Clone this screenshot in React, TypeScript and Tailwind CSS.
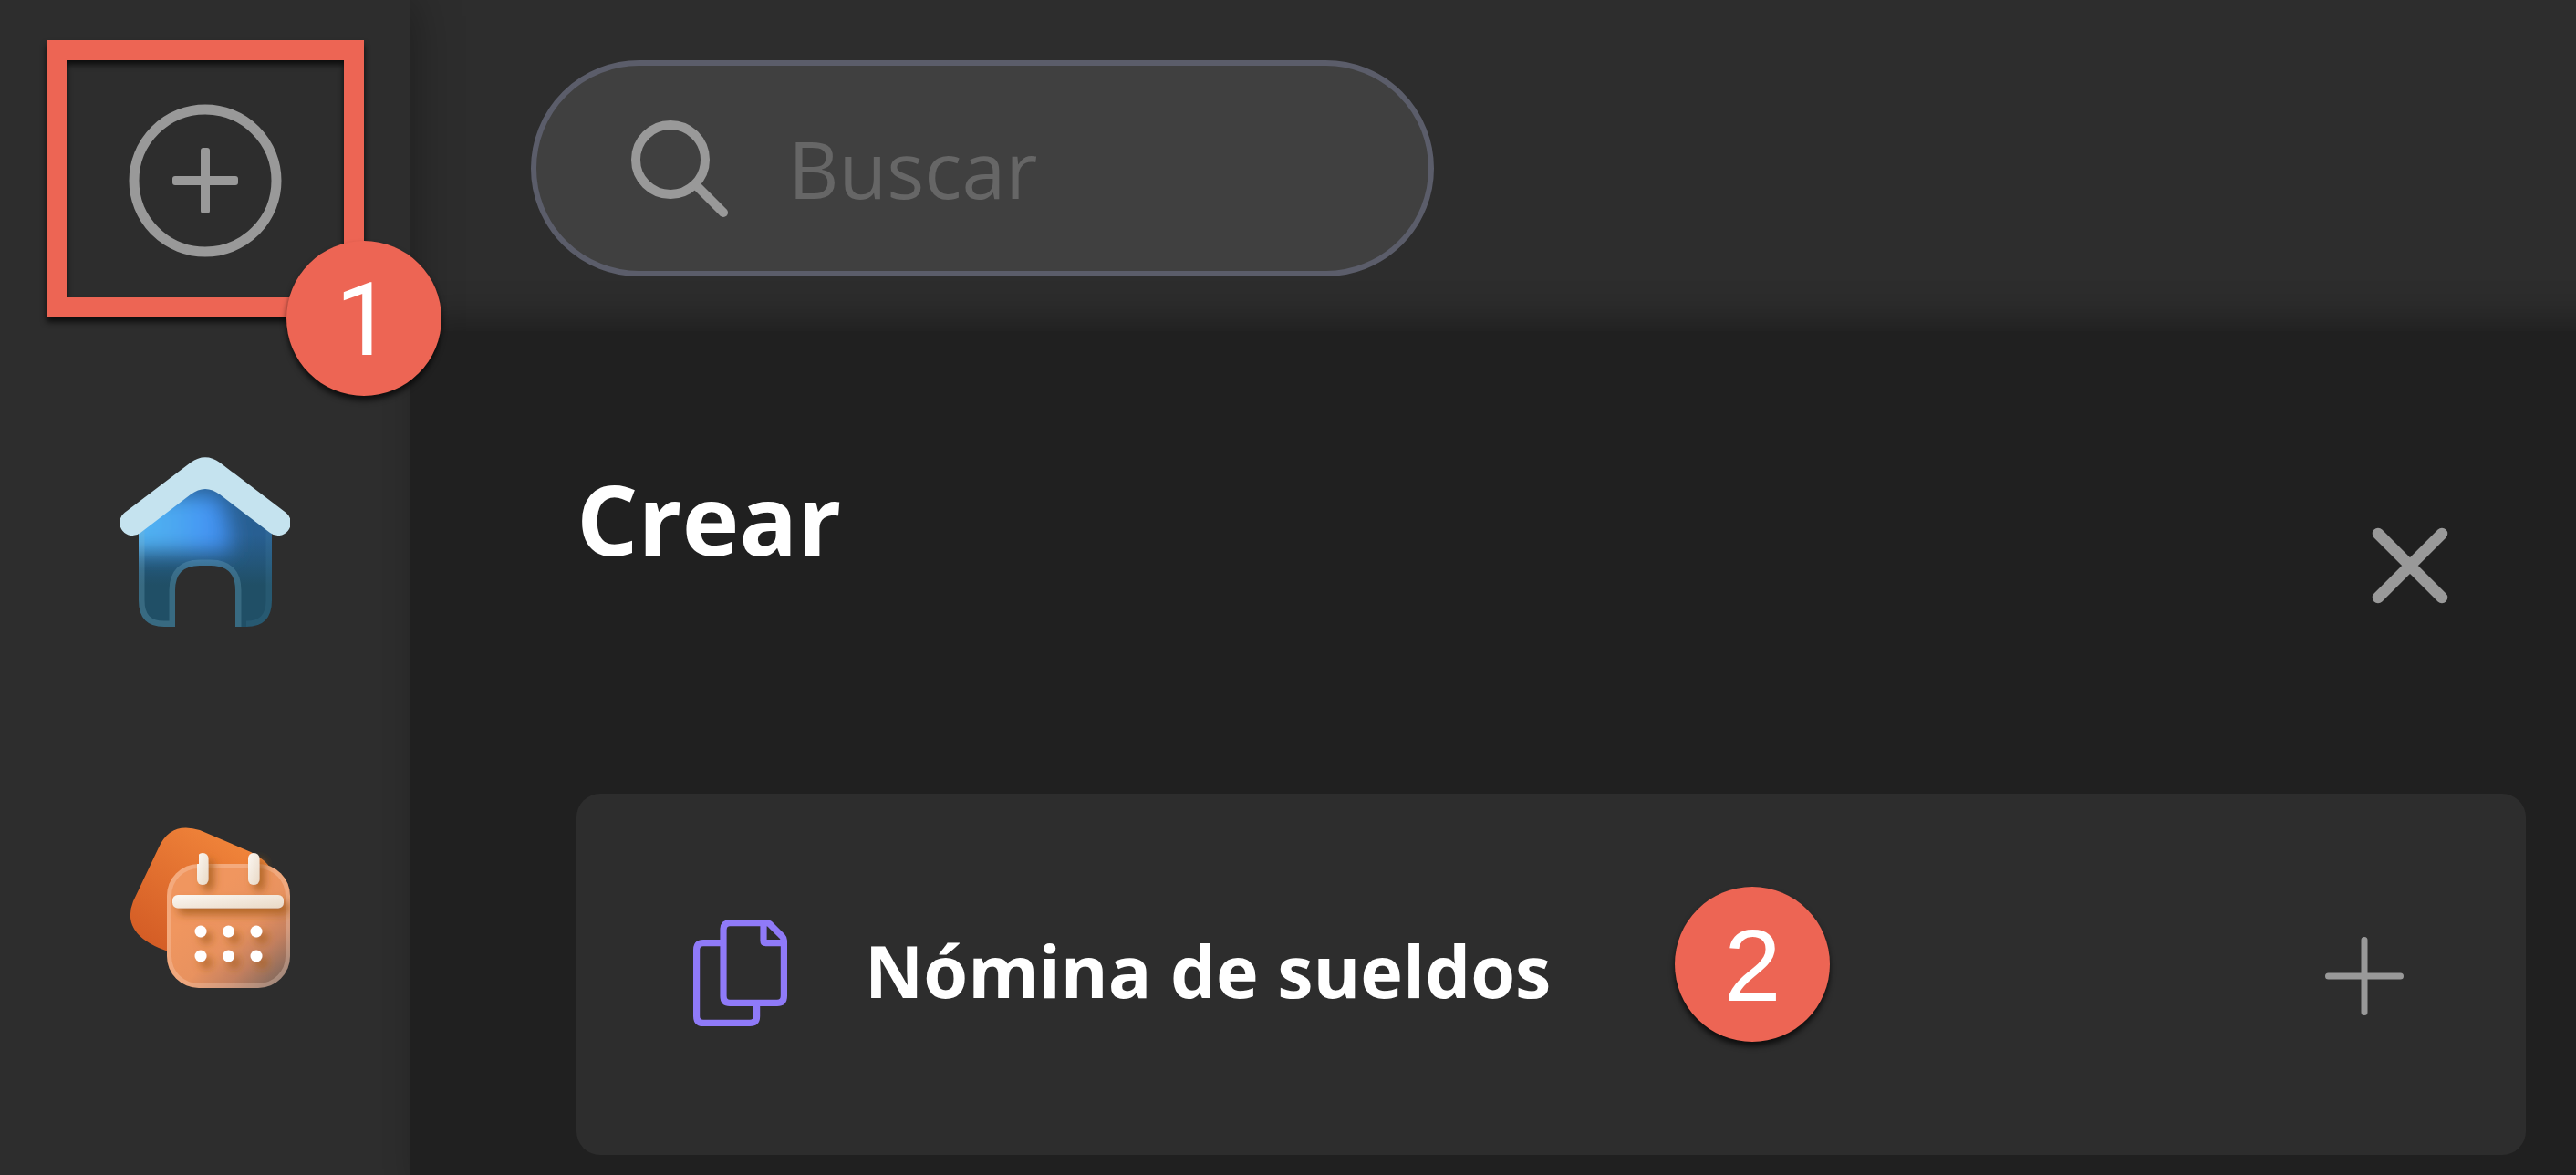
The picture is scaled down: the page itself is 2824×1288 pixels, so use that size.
import React, { useState } from "react";

type StepBadgeProps = {
  step: number;
  className?: string;
};

const StepBadge = ({ step, className = "" }: StepBadgeProps) => (
  <span
    className={`absolute z-20 flex size-[170px] items-center justify-center rounded-full bg-[#ed6554] pt-1 text-[112px] leading-none font-normal text-white drop-shadow-[0_5px_3px_rgba(0,0,0,0.7)] ${className}`}
  >
    {step}
  </span>
);

const CirclePlusIcon = () => (
  <svg className="size-[168px]" viewBox="0 0 168 168" fill="none" aria-hidden="true">
    <circle cx="84" cy="84" r="78" stroke="#999" strokeWidth="11" />
    <rect x="48" y="79" width="72" height="10" rx="3" fill="#999" />
    <rect x="79" y="48" width="10" height="72" rx="3" fill="#999" />
  </svg>
);

const SearchIcon = () => (
  <svg className="size-[106px] shrink-0" viewBox="0 0 106 106" fill="none" aria-hidden="true">
    <circle cx="43" cy="43" r="38" stroke="#999" strokeWidth="10" />
    <path d="M71 71 101 101" stroke="#999" strokeWidth="10" strokeLinecap="round" />
  </svg>
);

const CloseIcon = () => (
  <svg className="size-[84px]" viewBox="0 0 84 84" fill="none" aria-hidden="true">
    <path
      d="M7 7 77 77M77 7 7 77"
      stroke="#999"
      strokeWidth="12.5"
      strokeLinecap="round"
    />
  </svg>
);

const PlusIcon = () => (
  <svg className="size-[86px] shrink-0" viewBox="0 0 86 86" fill="none" aria-hidden="true">
    <path
      d="M43 3.5V82.5M3.5 43H82.5"
      stroke="#999"
      strokeWidth="7"
      strokeLinecap="round"
    />
  </svg>
);

const DocumentsIcon = () => (
  <svg
    className="h-[117px] w-[103px] shrink-0"
    viewBox="0 0 103 117"
    fill="none"
    stroke="#8f7af8"
    strokeWidth="7.2"
    aria-hidden="true"
  >
    <path d="M33 11.5Q33 3.6 40 3.6H80Q83 3.6 85 6L97.5 18.5Q99.4 20.5 99.4 23V83.5Q99.4 91.4 92 91.4H40Q33 91.4 33 83.5Z" />
    <path d="M77 4V23Q77 25.6 79.5 25.6H99" />
    <path d="M33 25.6H11Q3.6 25.6 3.6 33V106Q3.6 113.4 11 113.4H62Q69.6 113.4 69.6 106V92" />
  </svg>
);

const HomeIcon = () => (
  <svg className="size-[186px]" viewBox="0 0 186 186" fill="none" aria-hidden="true">
    <defs>
      <clipPath id="home-body">
        <path d="M20 74 79 31Q93 22 107 31L166 74V157Q166 186 138 186H126V146Q126 119 99 119H87Q60 119 60 146V186H48Q20 186 20 157Z" />
      </clipPath>
      <linearGradient id="home-base" x1="93" y1="40" x2="93" y2="140" gradientUnits="userSpaceOnUse">
        <stop stopColor="#285f92" />
        <stop offset="0.45" stopColor="#285f92" />
        <stop offset="1" stopColor="#204f66" />
      </linearGradient>
      <linearGradient id="home-glow" x1="20" y1="0" x2="130" y2="0" gradientUnits="userSpaceOnUse">
        <stop stopColor="#52b3f2" />
        <stop offset="0.35" stopColor="#4ca8f0" />
        <stop offset="0.68" stopColor="#4496f5" />
        <stop offset="1" stopColor="#3a7fd6" />
      </linearGradient>
      <filter id="home-blur" x="-40%" y="-60%" width="180%" height="220%">
        <feGaussianBlur stdDeviation="11" />
      </filter>
    </defs>
    <g clipPath="url(#home-body)">
      <rect x="20" y="20" width="146" height="166" fill="url(#home-base)" />
      <path
        d="M-20 104V50L60 42H104Q124 60 122 104Z"
        fill="url(#home-glow)"
        filter="url(#home-blur)"
      />
      <path
        d="M20 60V157Q20 186 48 186H60V146Q60 119 87 119H99Q126 119 126 146V190"
        stroke="#7fb9cf"
        strokeOpacity="0.26"
        strokeWidth="13"
      />
      <path
        d="M166 60V157Q166 186 138 186"
        stroke="#4f93b5"
        strokeOpacity="0.15"
        strokeWidth="13"
      />
    </g>
    <path
      d="M4.500 61 77 6Q93 -5.500 109 6L181.500 61A14 14 0 0 1 164 83L109 41Q93 29 77 41L22 83A14 14 0 0 1 4.500 61Z"
      fill="#c5e3ef"
    />
  </svg>
);

const CalendarIcon = () => (
  <svg className="size-[186px]" viewBox="0 0 186 186" fill="none" aria-hidden="true">
    <defs>
      <linearGradient id="cal-back" x1="120" y1="20" x2="30" y2="150" gradientUnits="userSpaceOnUse">
        <stop stopColor="#f0843a" />
        <stop offset="1" stopColor="#d25a24" />
      </linearGradient>
      <linearGradient id="cal-front" x1="100" y1="85" x2="186" y2="180" gradientUnits="userSpaceOnUse">
        <stop stopColor="#f0965f" />
        <stop offset="0.4" stopColor="#e8925f" />
        <stop offset="0.65" stopColor="#c4805f" />
        <stop offset="1" stopColor="#6f625c" />
      </linearGradient>
      <linearGradient id="cal-bar" x1="0" y1="0" x2="1" y2="1">
        <stop stopColor="#fbf7f2" />
        <stop offset="1" stopColor="#e9d9c6" />
      </linearGradient>
      <filter id="cal-shadow" x="-30%" y="-30%" width="180%" height="180%">
        <feDropShadow dx="6" dy="7" stdDeviation="5" floodColor="#a85f1c" floodOpacity="0.85" />
      </filter>
      <clipPath id="cal-clip">
        <path d="M51 85Q51 50 86 50V30H166V50Q186 58 186 85V151Q186 186 151 186H86Q51 186 51 151Z" />
      </clipPath>
    </defs>
    <path
      d="M42 32Q55 3 87 13L143 37Q160 45 168 60L130 150H64Q54 147 42 142Q1 124 14 91Z"
      fill="url(#cal-back)"
    />
    <rect x="51" y="50" width="135" height="136" rx="35" fill="url(#cal-front)" />
    <rect
      x="53.500"
      y="52.500"
      width="130"
      height="131"
      rx="32.500"
      stroke="#ffe0cc"
      strokeOpacity="0.28"
      strokeWidth="5"
    />
    <g clipPath="url(#cal-clip)">
      <g filter="url(#cal-shadow)">
        <rect x="84" y="38" width="12.500" height="35" rx="6" fill="url(#cal-bar)" />
        <rect x="140" y="38" width="12.500" height="35" rx="6" fill="url(#cal-bar)" />
        <rect x="57" y="84" width="122" height="14.500" rx="6" fill="url(#cal-bar)" />
      </g>
      <g fill="#fff" filter="url(#cal-shadow)">
        <circle cx="88" cy="124" r="6.500" />
        <circle cx="118.500" cy="124" r="6.500" />
        <circle cx="149" cy="124" r="6.500" />
        <circle cx="88" cy="151" r="6.500" />
        <circle cx="118.500" cy="151" r="6.500" />
        <circle cx="149" cy="151" r="6.500" />
      </g>
    </g>
  </svg>
);

export default function App() {
  const [searchTerm, setSearchTerm] = useState("");

  return (
    <div className="flex min-h-screen bg-[#2d2d2d] font-['Open_Sans','Noto_Sans',sans-serif] text-white">
      {/* SIDEBAR */}
      <aside className="relative flex w-[450px] shrink-0 flex-col items-center bg-[#2d2d2d] pt-11 shadow-[0_0_50px_rgba(0,0,0,0.36)]">
        <div className="relative">
          <button
            type="button"
            title="Crear"
            className="flex h-[304px] w-[348px] items-center justify-center pt-1"
          >
            <CirclePlusIcon />
          </button>
          <span className="pointer-events-none absolute inset-0 border-[22px] border-[#ed6554] drop-shadow-[0_5px_3px_rgba(0,0,0,0.7)]" />
          <StepBadge
            step={1}
            className="-right-[85px] -bottom-[86px] font-['Roboto',sans-serif]"
          />
        </div>

        <nav className="mt-[153px] flex flex-col gap-[210px]">
          <a href="#inicio" title="Inicio">
            <HomeIcon />
          </a>
          <a href="#calendario" title="Calendario">
            <CalendarIcon />
          </a>
        </nav>
      </aside>

      <div className="flex min-w-0 flex-1 flex-col">
        {/* SEARCH */}
        <header className="pt-[66px] pr-[55px] pb-[60px] pl-[132px]">
          <label className="flex h-[237px] w-full max-w-[990px] items-center gap-[66px] rounded-full border-[6px] border-[#5b5d6a] bg-[#404040] pr-20 pl-[104px]">
            <SearchIcon />
            <input
              type="text"
              aria-label="Buscar"
              placeholder="Buscar"
              className="w-full min-w-0 bg-transparent text-[86px] leading-[120px] outline-none placeholder:text-[#666]"
              value={searchTerm}
              onChange={(e) => setSearchTerm(e.target.value)}
            />
          </label>
        </header>

        {/* CREATE PANEL */}
        <main className="relative z-0 flex-1 bg-[#202020] pt-[145px] pr-[55px] pb-[22px] pl-[182px] shadow-[24px_0_38px_12px_rgba(0,0,0,0.33)]">
          <div className="mb-[208px] flex items-start justify-between">
            <h1 className="text-[106px] leading-[120px] font-bold">Crear</h1>
            <button type="button" title="Cerrar" className="mt-[70px] mr-[85px]">
              <CloseIcon />
            </button>
          </div>

          <button
            type="button"
            className="flex w-full items-center rounded-[26px] bg-[#2d2d2d] pt-[134px] pr-[134px] pb-[138px] pl-[128px] text-left"
          >
            <DocumentsIcon />
            <span className="relative ml-[85px] pb-1 text-[79px] leading-[120px] font-bold whitespace-nowrap">
              Nómina de sueldos
              <StepBadge
                step={2}
                className="-top-8 left-full ml-[136px] font-['Liberation_Sans',sans-serif]"
              />
            </span>
            <span className="ml-auto pt-2">
              <PlusIcon />
            </span>
          </button>
        </main>
      </div>
    </div>
  );
}
